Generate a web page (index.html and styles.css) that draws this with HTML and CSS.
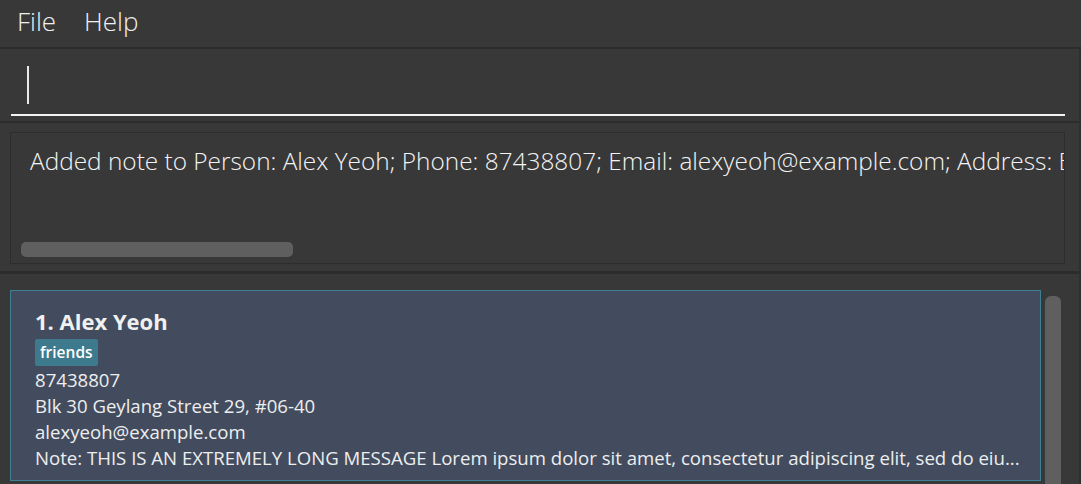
FILE: index.html
```html
<!DOCTYPE html>
<html>
<head>
<meta charset="utf-8">
<link rel="stylesheet" href="styles.css">
</head>
<body>
<div class="app">
  <nav class="menubar">
    <span class="menu-item">File</span>
    <span class="menu-item">Help</span>
  </nav>
  <section class="pane command-pane">
    <div class="command-box"><span class="caret"></span></div>
  </section>
  <section class="pane result-pane">
    <div class="result-box">
      <div class="result-text">Added note to Person: Alex Yeoh; Phone: 87438807; Email: alexyeoh@example.com; Address: Blk 30 Geylang Street 29, #06-40; Tags: [friends]</div>
      <div class="hscroll"><div class="hthumb"></div></div>
    </div>
  </section>
  <section class="pane list-pane">
    <div class="list">
      <article class="card">
        <h2 class="name">1. Alex Yeoh</h2>
        <div class="tags"><span class="tag">friends</span></div>
        <div class="field">87438807</div>
        <div class="field">Blk 30 Geylang Street 29, #06-40</div>
        <div class="field">alexyeoh@example.com</div>
        <div class="field note">Note: THIS IS AN EXTREMELY LONG MESSAGE Lorem ipsum dolor sit amet, consectetur adipiscing elit, sed do eiu...</div>
      </article>
    </div>
    <div class="vscroll"><div class="vthumb"></div></div>
  </section>
</div>
</body>
</html>
```
FILE: styles.css
```css
* { box-sizing: border-box; }
html, body {
  margin: 0;
  padding: 0;
  height: 100%;
  overflow: hidden;
}
body {
  background: #383838;
  font-family: "Open Sans", "Noto Sans", sans-serif;
  color: #f2f2f2;
}
.app {
  display: flex;
  flex-direction: column;
  height: 484px;
}
.menubar {
  height: 49px;
  display: flex;
  align-items: center;
  gap: 28px;
  padding-left: 17px;
  font-weight: 300;
  font-size: 26px;
  color: #f0f0f0;
  border-bottom: 2px solid #2c2c2c;
}
.menu-item { line-height: 1; position: relative; top: -3px; }
.pane {
  border-right: 2px solid #2f2f2f;
}
.command-pane {
  height: 74px;
  padding: 16px 14px 0 11px;
  border-bottom: 2px solid #2c2c2c;
}
.command-box {
  height: 51px;
  border-bottom: 2px solid #f4f4f4;
  padding: 1px 0 0 16px;
}
.caret {
  display: block;
  width: 2px;
  height: 38px;
  background: #e8e8e8;
}
.result-pane {
  height: 151px;
  padding: 9px 14px 0 10px;
  border-bottom: 3px solid #2c2c2c;
}
.result-box {
  height: 132px;
  border: 1px solid #2d2d2d;
  display: flex;
  flex-direction: column;
  overflow: hidden;
}
.result-text {
  padding: 12px 0 0 19px;
  font-weight: 300;
  font-size: 24.4px;
  line-height: 32px;
  white-space: nowrap;
  overflow: hidden;
  color: #f4f4f4;
  height: 94px;
}
.hscroll {
  padding: 15px 0 0 10px;
}
.hthumb {
  width: 272px;
  height: 15px;
  border-radius: 5px;
  background: #5f5f5f;
}
.list-pane {
  flex: 1;
  display: flex;
  padding: 16px 0 0 10px;
  overflow: hidden;
}
.list {
  width: 1031px;
  flex-shrink: 0;
}
.card {
  background: #424c5e;
  border: 1px solid #3f7f94;
  height: 191px;
  padding: 15px 0 0 24px;
}
.name {
  margin: 0;
  font-size: 22px;
  font-weight: 700;
  line-height: 30px;
  color: #f0f0f0;
}
.tags {
  display: flex;
  margin-top: 3px;
  margin-bottom: 1px;
}
.tag {
  background: #3d7a8e;
  color: #ffffff;
  font-weight: 600;
  font-size: 15.5px;
  line-height: 27px;
  height: 27px;
  padding: 0 5px;
  border-radius: 2px;
}
.field {
  font-size: 18.6px;
  line-height: 26px;
  color: #eeeeee;
  white-space: nowrap;
}
.vscroll {
  width: 20px;
  flex-shrink: 0;
  padding: 6px 0 0 4px;
}
.vthumb {
  width: 16px;
  height: 200px;
  background: #5f5f5f;
  border-radius: 6px 6px 0 0;
}
```
